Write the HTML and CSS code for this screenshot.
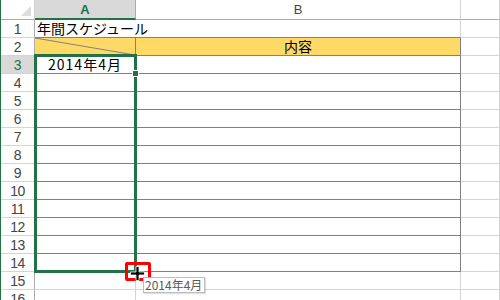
FILE: index.html
```html
<!DOCTYPE html>
<html lang="ja">
<head>
<meta charset="utf-8">
<link rel="stylesheet" href="styles.css">
</head>
<body>
<div class="sheet">
  <div class="grid">
    <div class="corner"><span class="tri"></span></div>
    <div class="ch sel">A</div>
    <div class="ch">B</div>
    <div class="ch"></div>

    <div class="rh">1</div>
    <div class="c a1 tb"><span class="txt">年間スケジュール</span></div>
    <div class="c tb"></div>
    <div class="c"></div>

    <div class="rh">2</div>
    <div class="c t y diag"><svg class="dline" viewBox="0 0 100 17" preserveAspectRatio="none"><line x1="0" y1="0" x2="100" y2="17" stroke="#7f8088" stroke-width="1" vector-effect="non-scaling-stroke"/></svg></div>
    <div class="c t y center">内容</div>
    <div class="c"></div>

    <div class="rh rsel">3</div>
    <div class="c t center wide">2014年4月</div>
    <div class="c t"></div>
    <div class="c"></div>

    <div class="rh">4</div><div class="c t"></div><div class="c t"></div><div class="c"></div>
    <div class="rh">5</div><div class="c t"></div><div class="c t"></div><div class="c"></div>
    <div class="rh">6</div><div class="c t"></div><div class="c t"></div><div class="c"></div>
    <div class="rh">7</div><div class="c t"></div><div class="c t"></div><div class="c"></div>
    <div class="rh">8</div><div class="c t"></div><div class="c t"></div><div class="c"></div>
    <div class="rh">9</div><div class="c t"></div><div class="c t"></div><div class="c"></div>
    <div class="rh">10</div><div class="c t"></div><div class="c t"></div><div class="c"></div>
    <div class="rh">11</div><div class="c t"></div><div class="c t"></div><div class="c"></div>
    <div class="rh">12</div><div class="c t"></div><div class="c t"></div><div class="c"></div>
    <div class="rh">13</div><div class="c t"></div><div class="c t"></div><div class="c"></div>
    <div class="rh">14</div><div class="c t"></div><div class="c t"></div><div class="c"></div>
    <div class="rh">15</div><div class="c"></div><div class="c"></div><div class="c"></div>
    <div class="rh">16</div><div class="c"></div><div class="c"></div><div class="c"></div>
  </div>

  <div class="selection"></div>
  <div class="handle"></div>
  <div class="redbox"></div>
  <svg class="cursor" viewBox="0 0 15 15" width="15" height="15">
    <path d="M6 0.5h3v5.5h5.5v3h-5.5v5.5h-3v-5.5h-5.5v-3h5.5z" fill="#000" stroke="#fff" stroke-width="0.8"/>
  </svg>
  <div class="tooltip">2014年4月</div>
</div>
</body>
</html>
```

FILE: styles.css
```css
html, body {
  margin: 0;
  padding: 0;
  background: #fff;
}

.sheet {
  position: relative;
  width: 499px;
  height: 300px;
  overflow: hidden;
  border-left: 1px solid #217346;
  font-family: "Noto Sans CJK JP", "Noto Sans", sans-serif;
}

.grid {
  display: grid;
  grid-template-columns: 34px 101px 325px 1fr;
  grid-template-rows: 20px repeat(16, 18px);
}

.grid > div {
  box-sizing: border-box;
}

.corner {
  background: #fff;
  border-right: 1px solid #d4d4d4;
  border-bottom: 1px solid #ababab;
  display: flex;
  justify-content: flex-end;
  align-items: flex-end;
  padding: 0 3px 3px 0;
}

.tri {
  width: 0;
  height: 0;
  border-left: 10px solid transparent;
  border-bottom: 10px solid #dcdcdc;
}

.ch {
  background: #fff;
  border-right: 1px solid #d4d4d4;
  border-bottom: 1px solid #ababab;
  font-family: "Liberation Sans", sans-serif;
  font-size: 13px;
  color: #444;
  display: flex;
  align-items: center;
  justify-content: center;
}

.ch.sel {
  background: #d9d9d9;
  color: #217346;
  font-weight: bold;
  border-bottom: 2px solid #217346;
  border-right-color: #ababab;
}

.rh {
  background: #fff;
  border-right: 1px solid #ababab;
  border-bottom: 1px solid #d4d4d4;
  font-family: "Liberation Sans", sans-serif;
  font-size: 14px;
  letter-spacing: -0.5px;
  color: #444;
  display: flex;
  align-items: center;
  justify-content: center;
  padding-top: 1px;
}

.rh.rsel {
  background: #d9d9d9;
  color: #217346;
}

.c {
  border-right: 1px solid #d4d4d4;
  border-bottom: 1px solid #d4d4d4;
  font-size: 14px;
  line-height: 17px;
  color: #000;
  display: flex;
  align-items: center;
}

.c.center {
  justify-content: center;
}

.c.wide {
  letter-spacing: 1px;
}

.c.t {
  border-right-color: #808080;
  border-bottom-color: #808080;
}

.c.tb {
  border-bottom-color: #808080;
}

.c.a1 {
  border-right: none;
  padding-left: 2px;
  white-space: nowrap;
  overflow: visible;
}

.txt {
  position: relative;
  z-index: 1;
}

.c.y {
  background: #ffd966;
}

.diag {
  position: relative;
}

.dline {
  position: absolute;
  left: 0;
  top: 0;
  width: 100%;
  height: 100%;
}

.selection {
  position: absolute;
  left: 33px;
  top: 54px;
  width: 103px;
  height: 219px;
  box-sizing: border-box;
  border: 3px solid #217346;
}

.handle {
  position: absolute;
  left: 131px;
  top: 70px;
  width: 5px;
  height: 5px;
  background: #217346;
  border: 1px solid #fff;
}

.redbox {
  position: absolute;
  left: 124px;
  top: 262px;
  width: 26px;
  height: 19px;
  box-sizing: border-box;
  border: 3px solid #ff0000;
  border-radius: 2px;
}

.cursor {
  position: absolute;
  left: 129px;
  top: 266px;
}

.tooltip {
  position: absolute;
  left: 142px;
  top: 277px;
  width: 62px;
  height: 16px;
  box-sizing: border-box;
  background: #fff;
  border: 1px solid #bdbdbd;
  box-shadow: 1px 1px 1px rgba(0,0,0,0.12);
  font-family: "Noto Sans CJK JP", sans-serif;
  font-size: 12px;
  line-height: 14px;
  color: #595959;
  padding-left: 1px;
  white-space: nowrap;
}
```
